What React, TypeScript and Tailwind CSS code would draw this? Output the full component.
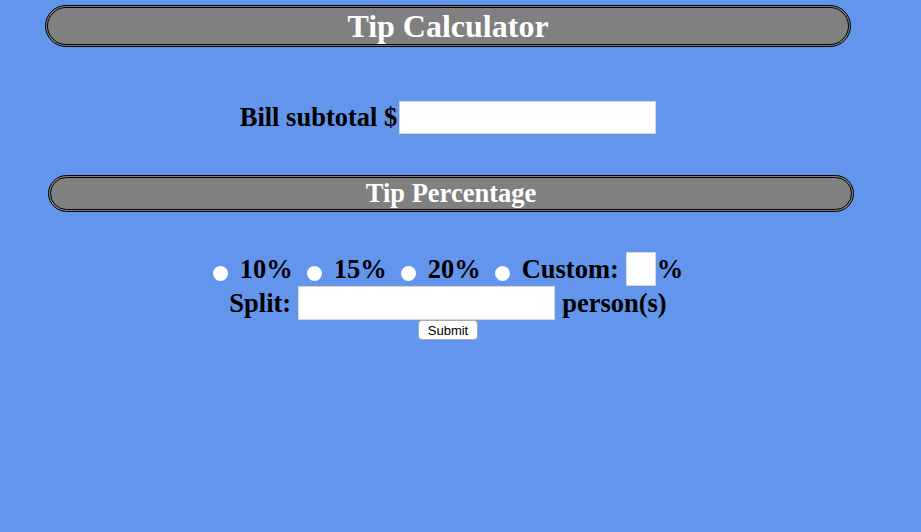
const serif = "font-['Liberation_Serif','Times_New_Roman',serif]";

function Radio() {
  return <span className="inline-block w-[15px] h-[15px] rounded-full bg-white mt-[8px] shrink-0" />;
}

export default function App() {
  return (
    <div className={`min-h-[532px] w-[921px] bg-[#6495ED] pt-[5px] ${serif} font-bold text-black`}>
      <div className="w-[896px]">
        <div className="ml-[45px] w-[806px] h-[42px] rounded-full border-[3px] border-double border-black bg-[#808080] flex items-center justify-center">
          <h1 className="text-[32px] leading-none text-white">Tip Calculator</h1>
        </div>

        <div className="mt-[54px] flex items-center justify-center h-[33px]">
          <span className="text-[26.5px] leading-none">Bill subtotal $</span>
          <input className="ml-[2px] w-[257px] h-[33px] bg-white border border-[#d6d6d6] outline-none" />
        </div>

        <div className="mt-[41px] ml-[48px] w-[806px] h-[37px] rounded-full border-[3px] border-double border-black bg-[#808080] flex items-center justify-center">
          <h2 className="text-[26.5px] leading-none text-white">Tip Percentage</h2>
        </div>

        <div className="mt-[40px] flex items-center justify-center h-[34px] text-[26.5px] leading-none">
          <Radio />
          <span className="ml-[12px]">10%</span>
          <span className="ml-[14px] flex"><Radio /></span>
          <span className="ml-[12px]">15%</span>
          <span className="ml-[14px] flex"><Radio /></span>
          <span className="ml-[12px]">20%</span>
          <span className="ml-[14px] flex"><Radio /></span>
          <span className="ml-[12px]">Custom:</span>
          <input className="ml-[7px] w-[30px] h-[34px] bg-white border border-[#d6d6d6] outline-none" />
          <span className="ml-[1px]">%</span>
        </div>

        <div className="flex items-center justify-center h-[34px] text-[26.5px] leading-none">
          <span>Split:</span>
          <input className="ml-[7px] w-[257px] h-[34px] bg-white border border-[#d6d6d6] outline-none" />
          <span className="ml-[7px]">person(s)</span>
        </div>

        <div className="flex justify-center">
          <button className="w-[60px] h-[20px] bg-white rounded-[4px] border border-[#a9a9a9] font-['Liberation_Sans',Arial,sans-serif] font-normal text-[13px] leading-none text-black">
            Submit
          </button>
        </div>
      </div>
    </div>
  );
}
